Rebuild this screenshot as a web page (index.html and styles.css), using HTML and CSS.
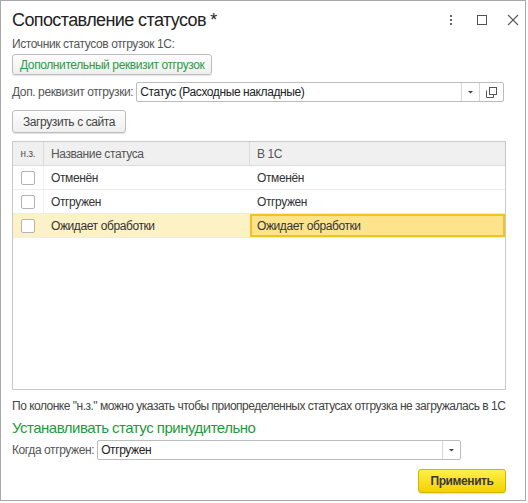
FILE: index.html
```html
<!DOCTYPE html>
<html>
<head>
<meta charset="UTF-8">
<link rel="stylesheet" href="styles.css">
</head>
<body>
<div class="window">
  <div class="titlebar">
    <h1 class="title">Сопоставление статусов *</h1>
    <div class="win-btns">
      <svg width="14" height="14" viewBox="0 0 14 14"><rect x="6" y="2" width="2" height="2" fill="#666"/><rect x="6" y="6" width="2" height="2" fill="#666"/><rect x="6" y="10" width="2" height="2" fill="#666"/></svg>
      <svg width="14" height="14" viewBox="0 0 14 14"><rect x="2.5" y="2.5" width="9" height="9" fill="none" stroke="#555"/></svg>
      <svg width="14" height="14" viewBox="0 0 14 14"><path d="M2 2 L12 12 M12 2 L2 12" stroke="#555" stroke-width="1.1"/></svg>
    </div>
  </div>

  <div class="content">
    <div class="label">Источник статусов отгрузок 1С:</div>
    <button class="btn btn-link">Дополнительный реквизит отгрузок</button>

    <div class="field-row">
      <span class="label">Доп. реквизит отгрузки:</span>
      <div class="input wide">
        <span class="input-text">Статус (Расходные накладные)</span>
        <span class="input-btn"><svg width="7" height="4" viewBox="0 0 7 4"><path d="M1 1 L3.5 3.5 L6 1Z" fill="#444"/></svg></span>
        <span class="input-btn"><svg width="11" height="11" viewBox="0 0 11 11"><rect x="3.5" y="0.5" width="7" height="7" fill="#fff" stroke="#555"/><path d="M0.5 3.5 V10.5 H7.5 V8" fill="none" stroke="#555"/></svg></span>
      </div>
    </div>

    <button class="btn btn-load">Загрузить с сайта</button>

    <div class="grid">
      <div class="grid-row grid-head">
        <div class="cell c-flag">н.з.</div>
        <div class="cell c-name">Название статуса</div>
        <div class="cell c-1c">В 1С</div>
      </div>
      <div class="grid-row">
        <div class="cell c-flag"><span class="check"></span></div>
        <div class="cell c-name">Отменён</div>
        <div class="cell c-1c">Отменён</div>
      </div>
      <div class="grid-row">
        <div class="cell c-flag"><span class="check"></span></div>
        <div class="cell c-name">Отгружен</div>
        <div class="cell c-1c">Отгружен</div>
      </div>
      <div class="grid-row selected">
        <div class="cell c-flag"><span class="check"></span></div>
        <div class="cell c-name">Ожидает обработки</div>
        <div class="cell c-1c current">Ожидает обработки</div>
      </div>
    </div>

    <div class="note">По колонке "н.з." можно указать чтобы приопределенных статусах отгрузка не загружалась в 1С</div>
    <div class="group-title">Устанавливать статус принудительно</div>

    <div class="field-row tight">
      <span class="label">Когда отгружен:</span>
      <div class="input short">
        <span class="input-text">Отгружен</span>
        <span class="input-btn"><svg width="7" height="4" viewBox="0 0 7 4"><path d="M1 1 L3.5 3.5 L6 1Z" fill="#444"/></svg></span>
      </div>
    </div>

    <div class="footer">
      <button class="btn btn-apply">Применить</button>
    </div>
  </div>
</div>
</body>
</html>
```

FILE: styles.css
```css
* {
  box-sizing: border-box;
  margin: 0;
  padding: 0;
}

body {
  background: #ffffff;
  font-family: "Liberation Sans", Arial, sans-serif;
  font-size: 12px;
  letter-spacing: -0.4px;
  color: #333;
}

.window {
  width: 526px;
  height: 501px;
  border: 1px solid #a8a8a8;
  background: #fff;
}

.titlebar {
  display: flex;
  align-items: center;
  justify-content: space-between;
  height: 36px;
  padding: 2px 5px 0 11px;
}

.title {
  font-size: 18px;
  font-weight: normal;
  letter-spacing: -0.6px;
  color: #222;
}

.win-btns {
  display: flex;
  gap: 17px;
  align-items: center;
}

.content {
  padding: 0 19px 0 11px;
}

.label {
  color: #555;
  white-space: nowrap;
}

.btn {
  font-family: inherit;
  font-size: 12px;
  letter-spacing: -0.4px;
  background: linear-gradient(#fdfdfd, #efefef);
  border: 1px solid #bdbdbd;
  border-radius: 3px;
  box-shadow: 0 1px 1px rgba(0,0,0,0.12);
  color: #444;
  cursor: pointer;
}

.btn-link {
  display: block;
  margin-top: 3px;
  height: 21px;
  padding: 0 7px;
  color: #2c9b47;
}

.field-row {
  display: flex;
  align-items: center;
  gap: 3px;
  margin-top: 7px;
}

.field-row.tight {
  margin-top: 4px;
}

.input {
  display: flex;
  height: 20px;
  border: 1px solid #bcbcbc;
  border-radius: 2px;
  background: #fff;
  color: #222;
}

.input.wide {
  width: 368px;
}

.input.short {
  width: 364px;
}

.input-text {
  flex: 1;
  padding: 1px 3px;
  line-height: 16px;
}

.input-btn {
  width: 18px;
  display: flex;
  align-items: center;
  justify-content: center;
  border-left: 1px solid #d6d6d6;
}

.input-btn + .input-btn {
  width: 24px;
}

.btn-load {
  display: block;
  margin-top: 8px;
  height: 23px;
  padding: 0 10px;
}

.grid {
  margin-top: 8px;
  width: 494px;
  height: 249px;
  border: 1px solid #c9c9c9;
  background: #fff;
}

.grid-row {
  display: grid;
  grid-template-columns: 31px 206px 1fr;
  height: 24px;
  border-bottom: 1px solid #ececec;
}

.grid-head {
  background: #f0f0f0;
  border-bottom: 1px solid #dcdcdc;
}

.grid-head .cell {
  border-right: 1px solid #dadada;
  color: #555;
}

.grid-head .cell:last-child {
  border-right: none;
}

.cell {
  display: flex;
  align-items: center;
  padding: 0 7px;
  color: #333;
  white-space: nowrap;
}

.grid-head .c-flag {
  font-size: 10px;
  letter-spacing: -0.2px;
  padding: 0 4px;
}

.c-flag {
  justify-content: center;
  border-right: 1px solid #f0f0f0;
}

.check {
  width: 14px;
  height: 14px;
  border: 1px solid #b3b3b3;
  border-radius: 2px;
  background: #fff;
}

.selected {
  background: #fdf2c6;
}

.current {
  background: #fde48c;
  border: 2px solid #f4c21c;
  padding-left: 5px;
}

.note {
  margin-top: 9px;
  color: #444;
  letter-spacing: -0.5px;
  white-space: nowrap;
}

.group-title {
  margin-top: 6px;
  font-size: 15px;
  letter-spacing: -0.5px;
  color: #1f9a3b;
}

.footer {
  display: flex;
  justify-content: flex-end;
  margin-top: 9px;
}

.btn-apply {
  width: 88px;
  height: 24px;
  background: linear-gradient(#fff04a, #f2d200);
  border: 1px solid #d4b400;
  font-weight: bold;
  color: #3a3a3a;
}
```
